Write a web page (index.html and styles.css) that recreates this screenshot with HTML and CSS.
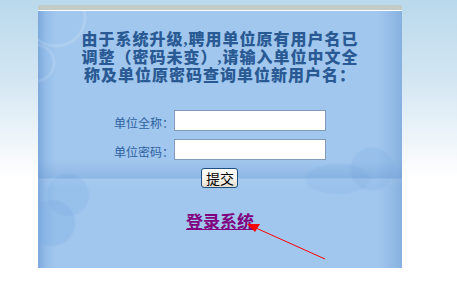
FILE: index.html
```html
<!DOCTYPE html>
<html lang="zh-CN">
<head>
<meta charset="utf-8">
<title>查询单位新用户名</title>
<link rel="stylesheet" href="styles.css">
</head>
<body>
<div class="panel">
  <div class="panel-top"></div>
  <div class="panel-body">
    <h1 class="notice">
      <span class="line">由于系统升级,聘用单位原有用户名已</span>
      <span class="line">调整（密码未变）,请输入单位中文全</span>
      <span class="line">称及单位原密码查询单位新用户名：</span>
    </h1>
    <form class="form">
      <div class="row">
        <label class="label">单位全称：</label>
        <input class="field" type="text">
      </div>
      <div class="row">
        <label class="label">单位密码：</label>
        <input class="field" type="password">
      </div>
      <button class="submit" type="button">提交</button>
    </form>
    <a class="login" href="#">登录系统</a>
  </div>
</div>
<svg class="arrow" width="457" height="286" viewBox="0 0 457 286">
  <line x1="325" y1="259" x2="256" y2="228" stroke="#ff0000" stroke-width="1"/>
  <polygon points="247,224 260,224 255,232" fill="#ff0000"/>
</svg>
</body>
</html>
```
FILE: styles.css
```css
html, body {
  margin: 0;
  padding: 0;
}
body {
  width: 457px;
  height: 286px;
  overflow: hidden;
  position: relative;
  background: linear-gradient(to bottom, #b9d9ec 0px, #d3e6f2 80px, #ffffff 178px, #ffffff 286px) no-repeat;
  font-family: "Noto Sans CJK SC", "Noto Sans", sans-serif;
}
.panel {
  margin: 5px 0 0 38px;
  width: 364px;
}
.panel-top {
  height: 5px;
  background: #c3cbc6;
  border-bottom: 1px solid #ffffff;
}
.panel-body {
  height: 257px;
  display: flex;
  flex-direction: column;
  align-items: center;
  background:
    linear-gradient(to bottom, rgba(255,255,255,0) 150px, rgba(90,140,200,0.28) 167px, rgba(255,255,255,0.06) 168px, rgba(255,255,255,0) 176px),
    radial-gradient(circle at 18px 6px, rgba(255,255,255,0) 27px, rgba(255,255,255,0.14) 28px, rgba(255,255,255,0.14) 30px, rgba(255,255,255,0) 31px),
    radial-gradient(circle at -2px 52px, rgba(255,255,255,0) 16px, rgba(255,255,255,0.12) 17px, rgba(255,255,255,0.12) 19px, rgba(255,255,255,0) 20px),
    radial-gradient(circle at 14px 212px, rgba(120,170,225,0.3) 0, rgba(120,170,225,0.3) 22px, rgba(120,170,225,0) 24px),
    radial-gradient(circle at 30px 184px, rgba(120,170,225,0.25) 0, rgba(120,170,225,0.25) 20px, rgba(120,170,225,0) 22px),
    radial-gradient(circle at 334px 158px, rgba(125,172,225,0.28) 0, rgba(125,172,225,0.28) 20px, rgba(125,172,225,0) 23px),
    radial-gradient(ellipse 34px 16px at 300px 168px, rgba(125,172,225,0.22) 0, rgba(125,172,225,0.22) 90%, rgba(125,172,225,0) 100%),
    linear-gradient(to right, #7ca8dc 0px, #94bde9 8px, #a1c7ee 18px, #a1c7ee 340px, #93bbe6 354px, #86b0df 364px);
}
.notice {
  margin: 20px 0 0 0;
  font-family: "Liberation Serif", "Noto Sans CJK SC", serif;
  font-size: 16px;
  line-height: 18px;
  letter-spacing: 1px;
  font-weight: 900;
  color: #2a5a94;
  text-align: center;
}
.line {
  display: block;
  white-space: nowrap;
}
.form {
  margin: 25px 0 0 0;
  display: flex;
  flex-direction: column;
  align-items: center;
  gap: 8px;
}
.row {
  display: flex;
  align-items: center;
  gap: 0;
}
.label {
  font-size: 12px;
  line-height: 14px;
  color: #2e62a0;
  white-space: nowrap;
  padding-top: 4px;
}
.field {
  box-sizing: border-box;
  width: 152px;
  height: 21px;
  margin: 0;
  padding: 1px 3px;
  border: 1px solid #7f9db9;
  background: #ffffff;
  font-size: 12px;
}
.submit {
  box-sizing: border-box;
  width: 37px;
  height: 20px;
  margin: 0;
  padding: 0;
  border: 1px solid #1f4d7e;
  border-radius: 3px;
  background: linear-gradient(to bottom, #ffffff 0%, #f4f2ea 60%, #e3dfcf 100%);
  font-family: "Noto Sans CJK SC", sans-serif;
  font-size: 14px;
  line-height: 16px;
  color: #000000;
}
.login {
  margin-top: 23px;
  font-size: 17px;
  line-height: 20px;
  font-weight: bold;
  color: #800080;
  text-decoration: underline;
}
.arrow {
  position: absolute;
  left: 0;
  top: 0;
  pointer-events: none;
}
```
